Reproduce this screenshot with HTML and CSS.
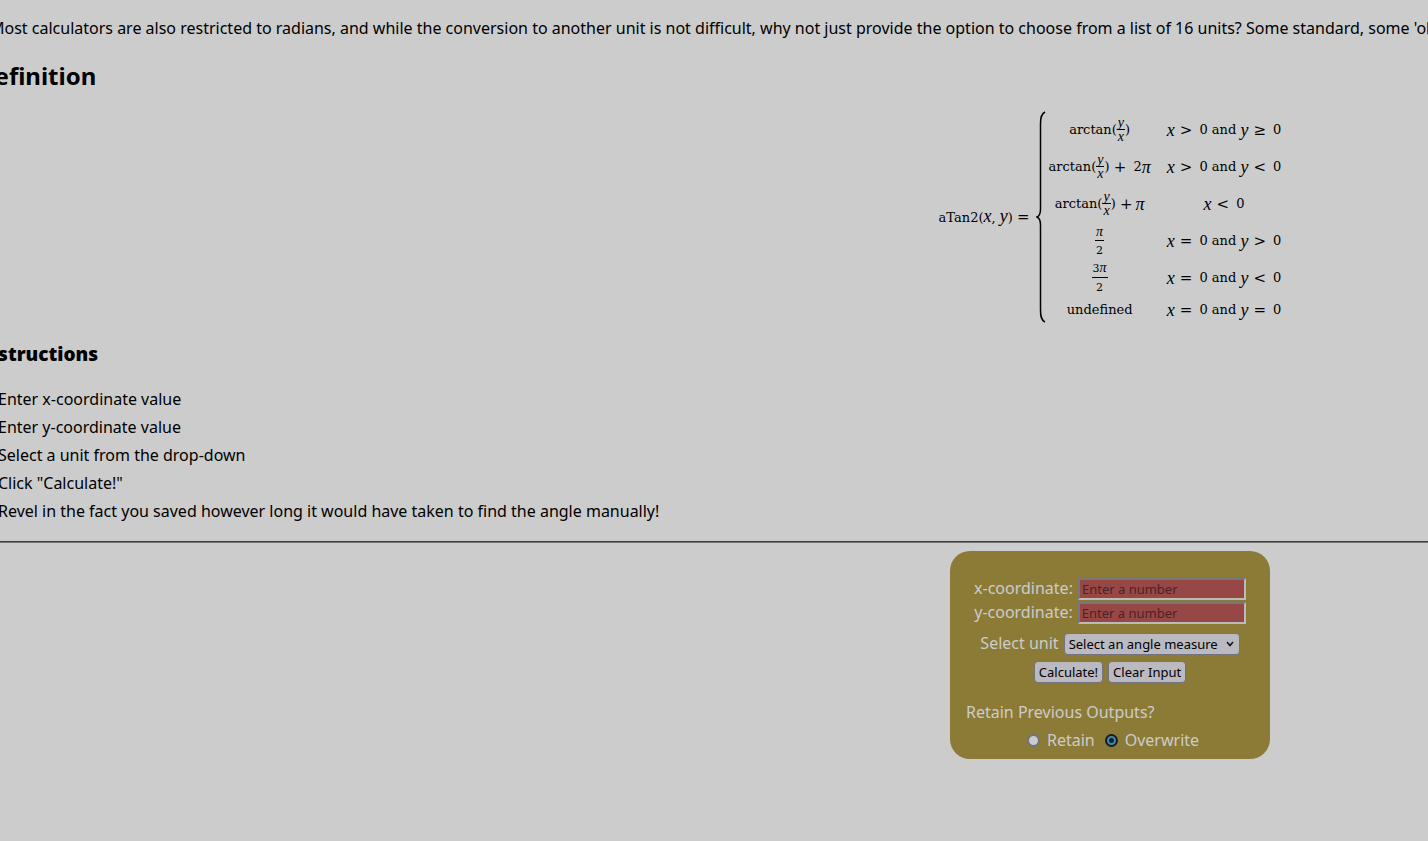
FILE: index.html
```html
<!DOCTYPE html>
<html lang="en">
<head>
<meta charset="utf-8">
<title>aTan2 Calculator</title>
<link rel="stylesheet" href="styles.css">
</head>
<body>
<main class="page">
  <p class="intro">Most calculators are also restricted to radians, and while the conversion to another unit is not difficult, why not just provide the option to choose from a list of 16 units? Some standard, some 'old'.</p>
  <h2 class="title">Definition</h2>
  <div class="equation">
    <span class="lhs">aTan2(<i>x</i>, <i>y</i>) <b>=</b></span>
    <svg class="brace" viewBox="0 0 10 212" preserveAspectRatio="none" aria-hidden="true"><path d="M9 1C5 3 4.500 7 4.500 13V98C4.500 103 3.500 105 1 106C3.500 107 4.500 109 4.500 114V199C4.500 205 5 209 9 211"/></svg>
    <div class="cases">
      <span class="case">arctan(<span class="frac"><i>y</i><i>x</i></span>)</span>
      <span class="case"><i>x</i> <b>&gt;</b> 0 and <i>y</i> <b>≥</b> 0</span>
      <span class="case">arctan(<span class="frac"><i>y</i><i>x</i></span>) <b>+</b> 2<i>π</i></span>
      <span class="case"><i>x</i> <b>&gt;</b> 0 and <i>y</i> <b>&lt;</b> 0</span>
      <span class="case">arctan(<span class="frac"><i>y</i><i>x</i></span>) <b>+</b> <i>π</i></span>
      <span class="case"><i>x</i> <b>&lt;</b> 0</span>
      <span class="case"><span class="frac tall"><i>π</i><span>2</span></span></span>
      <span class="case"><i>x</i> <b>=</b> 0 and <i>y</i> <b>&gt;</b> 0</span>
      <span class="case"><span class="frac tall"><span>3<i>π</i></span><span>2</span></span></span>
      <span class="case"><i>x</i> <b>=</b> 0 and <i>y</i> <b>&lt;</b> 0</span>
      <span class="case">undefined</span>
      <span class="case"><i>x</i> <b>=</b> 0 and <i>y</i> <b>=</b> 0</span>
    </div>
  </div>
  <h3 class="subtitle">Instructions</h3>
  <ol class="steps">
    <li>Enter x-coordinate value</li>
    <li>Enter y-coordinate value</li>
    <li>Select a unit from the drop-down</li>
    <li>Click "Calculate!"</li>
    <li>Revel in the fact you saved however long it would have taken to find the angle manually!</li>
  </ol>
  <hr class="rule">
  <form class="card">
    <div class="row"><label for="x">x-coordinate:</label><input class="field" id="x" type="text" placeholder="Enter a number"></div>
    <div class="row"><label for="y">y-coordinate:</label><input class="field" id="y" type="text" placeholder="Enter a number"></div>
    <div class="row unit"><label for="unit">Select unit</label>
      <span class="picker"><select id="unit"><option>Select an angle measure</option></select><svg viewBox="0 0 8 6" aria-hidden="true"><path d="M1 1L4 4.500L7 1"/></svg></span></div>
    <div class="row actions"><button type="button">Calculate!</button><button type="reset">Clear Input</button></div>
    <p class="question">Retain Previous Outputs?</p>
    <div class="row choices">
      <label><input type="radio" name="mode">Retain</label>
      <label><input type="radio" name="mode" checked>Overwrite</label>
    </div>
  </form>
</main>
</body>
</html>
```
FILE: styles.css
```css
* { box-sizing: border-box; }
html { background: #ccc; overflow: hidden; }
body { margin: 0; font: 16px/28px "Noto Sans", sans-serif; color: #000; }
/* The content is wider than the window and centred on its own axis */
.page { margin: 0 -815px 0 -23px; padding-top: 14px; }
.intro { margin: 0; padding-left: 13px; white-space: nowrap; }
.title { margin: 18px 0 0; font-size: 24px; line-height: 32px; }
.equation { display: flex; justify-content: center; align-items: center; margin-top: 19px; font: 13px/20px "DejaVu Serif", serif; white-space: nowrap; }
.equation i { font: italic 18px/20px "Liberation Serif", serif; }
.equation b { font-size: 15px; font-weight: 400; }
.case b { margin-right: 3px; }
.case i + b { margin-left: 5px; }
.lhs { padding-right: 6px; }
.brace { width: 10px; height: 212px; fill: none; stroke: #000; stroke-width: 1.500; }
.cases { display: grid; grid-template-columns: auto auto; grid-template-rows: repeat(5, 37px) 27px; column-gap: 16px; padding-left: 3px; }
.case { display: flex; justify-content: center; align-items: center; white-space: pre; }
.frac { display: inline-flex; flex-direction: column; align-items: center; font-size: 11px; line-height: 13px; }
.equation .frac i { font-size: 14px; line-height: 13px; }
.frac > :first-child { padding: 0 1px; border-bottom: 1px solid #000; }
.tall > :last-child { padding-top: 3px; }
.tall > :first-child { padding-bottom: 2px; }
.subtitle { margin: 18px 0 0; font-size: 19px; line-height: 26px; font-weight: 900; }
.steps { margin: 18px 0 0; padding-left: 21px; }
.rule { height: 2px; margin: 16px 0 8px; border: 0; border-top: 1px solid #3c3c3c; background: #777; }
.card { width: 320px; margin: 0 auto; padding: 26px 16px 5px; border-radius: 20px; background: #8c7b36; color: #ccc; }
.row { display: flex; justify-content: center; align-items: center; gap: 5px; height: 24px; }
.row label { padding-bottom: 2px; }
.field { width: 168px; height: 22px; padding: 0 2px; border: 2px solid; border-color: #777 #bbb #bbb #777; background: #984747; color: #222; font: 13px "Noto Sans", sans-serif; }
.field::placeholder { color: #4a2323; opacity: 1; }
.unit { height: 28px; margin-top: 5px; }
.picker { display: inline-grid; align-items: center; }
.picker > * { grid-area: 1 / 1; }
.picker svg { justify-self: end; width: 8px; height: 6px; margin-right: 6px; fill: none; stroke: #111; stroke-width: 1.500; pointer-events: none; }
select, button { height: 22px; border: 1px solid #727280; border-radius: 4px; background: #babac0; color: #000; font: 13px "Noto Sans", sans-serif; }
select { appearance: none; width: 176px; padding: 0 4px; }
button { padding: 0 4px; }
.actions { height: 28px; }
.question { margin: 12px 0 0; }
.choices { height: 28px; gap: 10px; padding-left: 6px; }
.choices label { display: flex; align-items: center; gap: 7px; padding: 0; }
.choices input { appearance: none; width: 13px; height: 13px; margin: 0; border: 2px solid #727280; border-radius: 50%; background: #ccc; }
.choices input:checked { border-color: #161c24; background: radial-gradient(circle, #161c24 2px, #3a8eb4 3px); }
```
